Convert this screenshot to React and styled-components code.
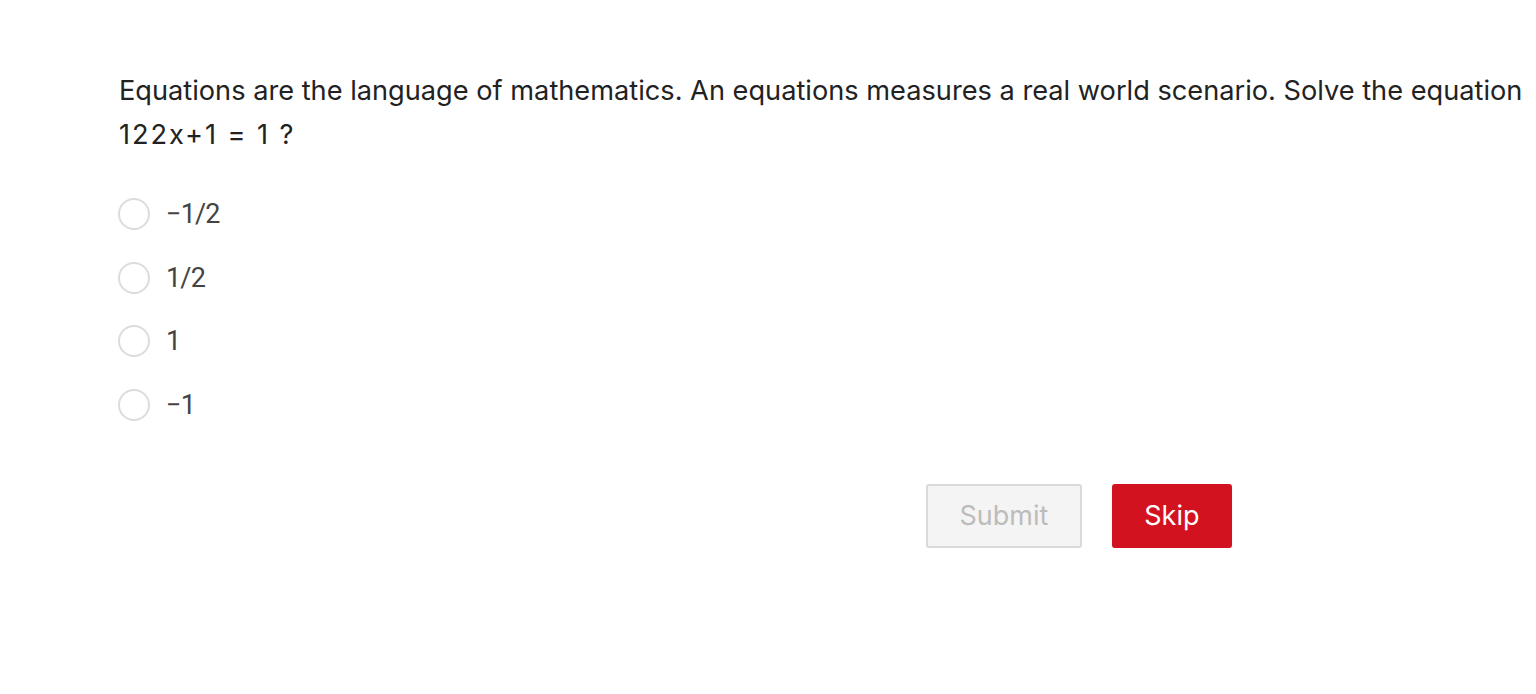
import React, { useState } from "react";
import styled, { createGlobalStyle } from "styled-components";

const GlobalStyle = createGlobalStyle`
  body {
    margin: 0;
    background: #fff;
    font-family: Inter, "Liberation Sans", sans-serif;
  }
`;

const options = ["−1/2", "1/2", "1", "−1"];

const App = () => {
  const [picked, setPicked] = useState(null);

  return (
    <>
      <GlobalStyle />
      <Wrapper>
        <Question>
          Equations are the language of mathematics. An equations measures a real world scenario. Solve the equation
          <Equation>122x+1 = 1 ?</Equation>
        </Question>

        <Options>
          {options.map((opt, i) => (
            <Option key={i} onClick={() => setPicked(i)}>
              <Radio checked={picked === i} />
              <Label>{opt}</Label>
            </Option>
          ))}
        </Options>

        <Actions>
          <Button disabled>Submit</Button>
          <Button $primary>Skip</Button>
        </Actions>
      </Wrapper>
    </>
  );
};

const Wrapper = styled.div`
  padding: 69px 0 0 119px;
  width: 1113px;
`;

const Question = styled.div`
  font-size: 27.2px;
  line-height: 44px;
  color: #222;
  white-space: nowrap;
`;

const Equation = styled.div`
  letter-spacing: 1.9px;
`;

const Options = styled.div`
  display: flex;
  flex-direction: column;
  gap: 31.5px;
  margin-top: 41px;
  margin-left: -1px;
`;

const Option = styled.label`
  display: flex;
  align-items: center;
  gap: 16px;
  cursor: pointer;
  height: 32px;
`;

const Radio = styled.span`
  width: 32px;
  height: 32px;
  border-radius: 50%;
  border: 2px solid #dcdcdc;
  box-sizing: border-box;
  background: #fff;
  flex-shrink: 0;
  box-shadow: ${(p) => (p.checked ? "inset 0 0 0 8px #d3121f" : "none")};
`;

const Label = styled.span`
  font-family: Roboto, "Liberation Sans", sans-serif;
  font-size: 27px;
  letter-spacing: -0.8px;
  color: #444;
`;

const Actions = styled.div`
  display: flex;
  justify-content: flex-end;
  gap: 30px;
  margin-top: 63px;
`;

const Button = styled.button`
  height: 64px;
  padding: 0 ${(p) => (p.$primary ? "30.5px" : "31.5px")};
  font-family: Inter, "Liberation Sans", sans-serif;
  font-size: 27px;
  border-radius: 3px;
  cursor: pointer;
  border: 2px solid ${(p) => (p.$primary ? "#d3121f" : "#d9d9d9")};
  background: ${(p) => (p.$primary ? "#d3121f" : "#f4f4f4")};
  color: ${(p) => (p.$primary ? "#fff" : "#bcbcbc")};
  box-shadow: ${(p) => (p.$primary ? "0 2px 2px rgba(0,0,0,0.08)" : "none")};

  &:disabled {
    cursor: not-allowed;
  }
`;

export default App;
